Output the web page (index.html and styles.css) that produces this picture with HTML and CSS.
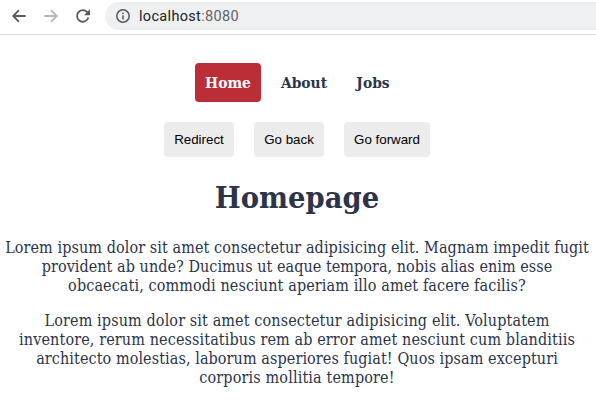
FILE: index.html
```html
<!DOCTYPE html>
<html lang="en">
<head>
<meta charset="utf-8">
<title>Homepage</title>
<link rel="stylesheet" href="styles.css">
</head>
<body>
<header class="toolbar">
  <svg class="icon" viewBox="0 0 16 16"><path d="M14.6 8H2.5M8 2.2L2.2 8L8 13.8"/></svg>
  <svg class="icon icon-off" viewBox="0 0 16 16"><path d="M1.4 8H13.5M8 2.2L13.8 8L8 13.8"/></svg>
  <svg class="icon" viewBox="0 0 16 16"><path d="M13.4 9.6A5.8 5.8 0 1 1 12.2 4.1L13.6 5.5"/><path class="solid" d="M15 1.2V7.2H9z"/></svg>
  <div class="address">
    <svg class="info" viewBox="0 0 14 14"><circle cx="7" cy="7" r="6.2"/><path d="M7 6.2V10.4M7 3.6V5"/></svg>
    <span class="url">localhost<span class="port">:8080</span></span>
  </div>
</header>
<main class="page">
  <nav class="nav">
    <a class="link link-home active">Home</a>
    <a class="link link-about">About</a>
    <a class="link link-jobs">Jobs</a>
  </nav>
  <div class="actions">
    <button class="button">Redirect</button>
    <button class="button">Go back</button>
    <button class="button button-wide">Go forward</button>
  </div>
  <h1 class="title">Homepage</h1>
  <p class="text">
    <span class="line l1">Lorem ipsum dolor sit amet consectetur adipisicing elit. Magnam impedit fugit</span>
    <span class="line l2">provident ab unde? Ducimus ut eaque tempora, nobis alias enim esse</span>
    <span class="line l3">obcaecati, commodi nesciunt aperiam illo amet facere facilis?</span>
  </p>
  <p class="text">
    <span class="line l4">Lorem ipsum dolor sit amet consectetur adipisicing elit. Voluptatem</span>
    <span class="line l5">inventore, rerum necessitatibus rem ab error amet nesciunt cum blanditiis</span>
    <span class="line l6">architecto molestias, laborum asperiores fugiat! Quos ipsam excepturi</span>
    <span class="line l7">corporis mollitia tempore!</span>
  </p>
</main>
</body>
</html>
```
FILE: styles.css
```css
* { box-sizing: border-box; }
body { margin: 0; background: #fff; color: #2c3449; font-family: "DejaVu Serif Condensed", "DejaVu Serif", serif; font-stretch: condensed; overflow: hidden; }
.toolbar { display: flex; align-items: center; height: 35px; padding: 0 0 3px 11px; border-bottom: 1px solid #d5d6d8; }
.icon { width: 16px; height: 16px; margin-right: 16px; fill: none; stroke: #55595e; stroke-width: 1.8; }
.icon-off { stroke: #b4b6b8; }
.icon + .address { margin-left: -2px; }
.solid { fill: #55595e; stroke: none; }
.address { display: flex; align-items: center; flex: 1; height: 28px; padding-left: 11px; background: #eff0f2; border-radius: 14px 0 0 14px; }
.info { width: 14px; height: 14px; margin-right: 9px; fill: none; stroke: #55595e; stroke-width: 1.5; }
.url { padding-top: 2px; font: 14.5px/20px Roboto, sans-serif; letter-spacing: 0.32px; color: #202124; }
.port { color: #5f6368; }
.page { width: 594px; padding-top: 28px; text-align: center; }
.nav { display: flex; justify-content: center; gap: 10px; }
.link { height: 39px; border-radius: 4px; font-size: 15.4px; font-weight: 700; line-height: 40px; white-space: nowrap; }
.link-home { width: 66px; }
.link-about { width: 66px; }
.link-jobs { width: 52px; }
.active { background: #bb2e38; color: #fff; }
.actions { display: flex; justify-content: center; gap: 20px; margin-top: 20px; }
.button { width: 70px; height: 35px; padding: 0; border: 0; border-radius: 4px; background: #ececec; color: #000; font: 13.333px "Liberation Sans", Arial, sans-serif; white-space: nowrap; }
.button-wide { width: 86px; }
.title { margin: 21px 0 22px; font-size: 30.5px; line-height: 38px; font-weight: 700; }
.text { margin: 0 0 16px; font-size: 16px; line-height: 19px; }
.line { display: block; white-space: nowrap; }
.l1 { letter-spacing: 0.09px; }
.l2 { letter-spacing: 0.05px; }
.l3 { letter-spacing: 0.11px; }
.l4 { letter-spacing: 0.12px; }
.l5 { letter-spacing: 0.12px; }
.l6 { letter-spacing: 0.09px; }
.l7 { letter-spacing: 0.15px; }
```
